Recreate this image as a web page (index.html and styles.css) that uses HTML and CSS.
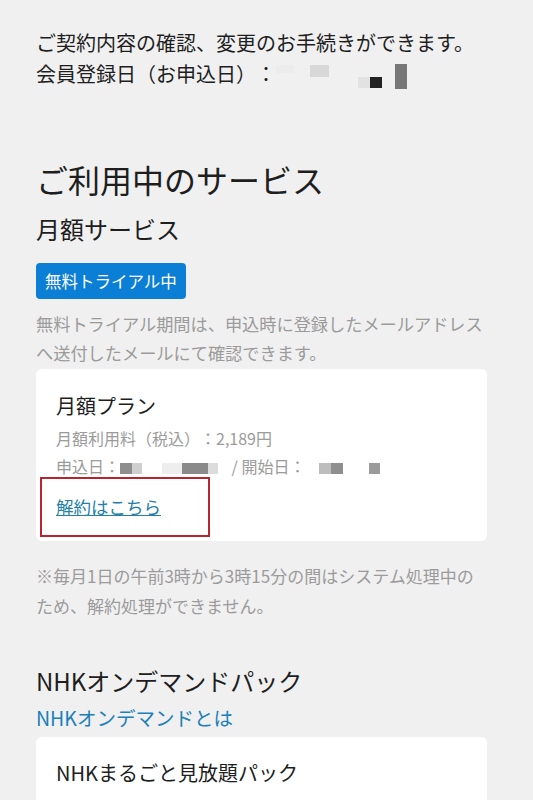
FILE: index.html
```html
<!DOCTYPE html>
<html lang="ja">
<head>
    <meta charset="UTF-8">
    <meta name="viewport" content="width=device-width, initial-scale=1.0">
    <title>ご契約内容</title>
    <link rel="stylesheet" href="styles.css">
</head>
<body>

<div class="page">
    <!-- Cabecera con fecha de alta -->
    <p class="intro">
        ご契約内容の確認、変更のお手続きができます。<br>
        会員登録日（お申込日）：<span class="mosaic"><i class="m m1"></i><i class="m m2"></i><i class="m m3"></i><i class="m m4"></i></span>
    </p>

    <h1>ご利用中のサービス</h1>
    <h2>月額サービス</h2>

    <span class="badge">無料トライアル中</span>
    <p class="note">無料トライアル期間は、申込時に登録したメールアドレス<br>へ送付したメールにて確認できます。</p>

    <div class="card">
        <div class="card-title">月額プラン</div>
        <div class="card-line">月額利用料（税込）：2,189円</div>
        <div class="card-line">申込日：<span class="mosaic"><i class="d d1"></i><i class="d d2"></i><i class="d d3"></i><i class="d d4"></i></span> / 開始日：<span class="mosaic"><i class="d d5"></i><i class="d d6"></i><i class="d d7"></i></span></div>
        <div class="card-link"><a href="#">解約はこちら</a></div>
        <!-- Marco rojo de la captura -->
        <div class="highlight"></div>
    </div>

    <p class="note small">※毎月1日の午前3時から3時15分の間はシステム処理中の<br>ため、解約処理ができません。</p>

    <h2 class="pack">NHKオンデマンドパック</h2>
    <a class="plain-link" href="#">NHKオンデマンドとは</a>

    <div class="card card-next">
        <div class="card-title">NHKまるごと見放題パック</div>
    </div>
</div>

</body>
</html>
```

FILE: styles.css
```css
/* Colores de la pantalla */
:root {
    --fondo: #f0f0f0;
    --texto: #1e1e1e;
    --texto-gris: #9b9b9b;
    --azul: #0b7fd6;
    --enlace: #217fa8;
    --enlace-nhk: #1c7fba;
}

body {
    margin: 0;
    background-color: var(--fondo);
    color: var(--texto);
    font-family: "Noto Sans CJK JP", "Noto Sans", sans-serif;
    text-spacing-trim: space-all;
}

.page {
    padding: 27px 46px 40px 36px;
}

.intro {
    margin: 0;
    font-size: 20px;
    line-height: 31px;
    white-space: nowrap;
}

.mosaic {
    display: inline-block;
    position: relative;
    vertical-align: middle;
    height: 26px;
}

.m, .d {
    display: inline-block;
    vertical-align: top;
}

.m1 { width: 18px; height: 8px; margin-top: 1px; background: #ececec; }
.m2 { width: 19px; height: 12px; margin-left: 16px; margin-top: 1px; background: #d8d8d8; }
.m3 { width: 12px; height: 11px; margin-left: 41px; margin-top: 13px; background: #222; box-shadow: -12px 0 0 #e2e2e2; }
.m4 { width: 12px; height: 25px; margin-left: 13px; background: #777; }

h1 {
    margin: 67px 0 0;
    font-size: 32px;
    line-height: 44px;
    font-weight: normal;
}

h2 {
    margin: 11px 0 0;
    font-size: 24px;
    line-height: 34px;
    font-weight: normal;
}

.badge {
    display: inline-block;
    margin-top: 17px;
    padding: 0 9px;
    height: 36px;
    line-height: 36px;
    background-color: var(--azul);
    color: #fff;
    font-size: 16.5px;
    border-radius: 4px;
}

.note {
    margin: 10px 0 0;
    font-size: 17.2px;
    line-height: 29px;
    color: var(--texto-gris);
    white-space: nowrap;
}

.note.small {
    margin-top: 20px;
    font-size: 17px;
    line-height: 30px;
}

.card {
    position: relative;
    margin-top: 2px;
    padding: 23px 20px 20px;
    background-color: #fff;
    border-radius: 6px;
}

.card-title {
    font-size: 20px;
    line-height: 28px;
}

.card-line {
    margin-top: 4px;
    font-size: 16px;
    line-height: 28px;
    color: var(--texto-gris);
    white-space: nowrap;
}

.card-line + .card-line {
    margin-top: 0;
}

.d { height: 11px; margin-top: 8px; }
.d1 { width: 12px; background: #8e8e8e; }
.d2 { width: 10px; background: #cfcfcf; }
.d3 { width: 20px; margin-left: 20px; background: #eeeeee; }
.d4 { width: 26px; background: #8a8a8a; box-shadow: 10px 0 0 #dcdcdc; margin-right: 20px; }
.d5 { width: 12px; margin-left: 14px; background: #bdbdbd; }
.d6 { width: 12px; background: #8f8f8f; }
.d7 { width: 11px; margin-left: 26px; background: #9a9a9a; margin-right: 30px; }

.card-link {
    margin-top: 12px;
    font-size: 17.5px;
    line-height: 28px;
}

.card-link a {
    color: var(--enlace);
    text-decoration: underline;
}

.highlight {
    position: absolute;
    left: 4px;
    top: 108px;
    width: 166px;
    height: 56px;
    border: 2px solid #b8252f;
}

.pack {
    margin-top: 43px;
}

.plain-link {
    display: block;
    margin-top: 6px;
    font-size: 19.5px;
    line-height: 28px;
    color: var(--enlace-nhk);
    text-decoration: none;
}

.card-next {
    margin-top: 5px;
    padding-top: 22px;
    padding-bottom: 40px;
}
```
